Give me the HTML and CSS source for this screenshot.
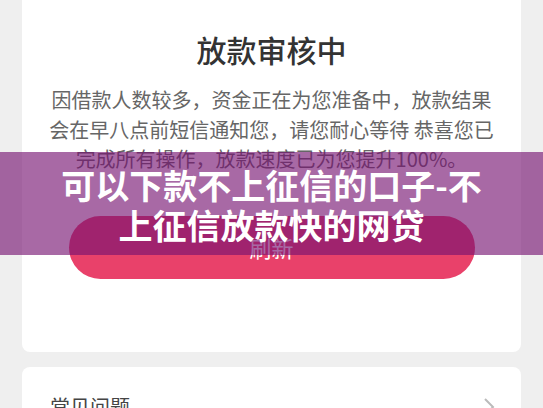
FILE: index.html
```html
<!DOCTYPE html>
<html lang="zh-CN">
  <head>
    <meta charset="UTF-8" />
    <meta name="viewport" content="width=device-width, initial-scale=1.0" />
    <title>放款审核中</title>
    <link rel="stylesheet" href="styles.css">
  </head>
  <body>
    <main class="page">
      <section class="card status">
        <h1 class="status-title">放款审核中</h1>
        <p class="status-text">
          因借款人数较多，资金正在为您准备中，放款结果会在早八点前短信通知您，请您耐心等待 恭喜您已完成所有操作，放款速度已为您提升100%。
        </p>
        <button class="refresh">刷新</button>
      </section>

      <section class="card faq">
        <span class="faq-label">常见问题</span>
        <svg class="chevron" width="12" height="20" viewBox="0 0 12 20">
          <path d="M2 2 L10 10 L2 18" fill="none" stroke="#bbbbbb" stroke-width="2" />
        </svg>
      </section>
    </main>

    <div class="banner">
      <p>可以下款不上征信的口子-不<br />上征信放款快的网贷</p>
    </div>
  </body>
</html>
```

FILE: styles.css
```css
* {
  margin: 0;
  box-sizing: border-box;
}

body {
  margin: 0;
  padding: 0;
  background: #efefef;
  font-family: "Noto Sans CJK SC", "Noto Sans", sans-serif;
  height: 408px;
  overflow: hidden;
}

.page {
  padding: 0 22px;
  display: flex;
  flex-direction: column;
  gap: 15px;
}

.card {
  background: #fff;
  border-radius: 8px;
}

.status {
  margin-top: -20px;
  padding: 49px 0 73px;
  display: flex;
  flex-direction: column;
  align-items: center;
}

.status-title {
  font-size: 30px;
  line-height: 40px;
  font-weight: 500;
  color: #333;
}

.status-text {
  margin-top: 16px;
  width: 452px;
  font-size: 20px;
  line-height: 29.5px;
  color: #666;
  text-align: center;
}

.refresh {
  margin-top: 42px;
  width: 406px;
  height: 63px;
  border: none;
  border-radius: 32px;
  background: #e9416a;
  color: #fff;
  font-family: inherit;
  font-size: 22px;
}

.faq {
  padding: 26px 26px 26px 28px;
  display: flex;
  justify-content: space-between;
  align-items: center;
}

.faq-label {
  font-size: 20px;
  line-height: 28px;
  color: #444;
}

.banner {
  position: absolute;
  left: 0;
  top: 152px;
  width: 100%;
  height: 103px;
  background: rgba(117, 18, 113, 0.63);
  display: flex;
  align-items: center;
  justify-content: center;
}

.banner p {
  color: #fff;
  font-size: 34px;
  line-height: 40px;
  font-weight: 700;
  text-align: center;
  margin-top: 2px;
}
```
